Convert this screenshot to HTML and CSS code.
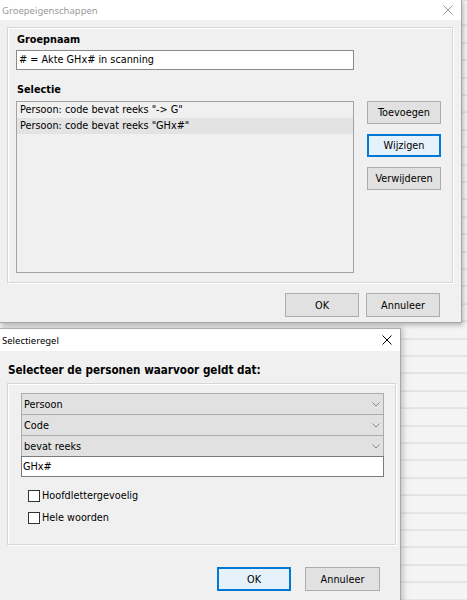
FILE: index.html
```html
<!DOCTYPE html>
<html lang="nl">
<head>
<meta charset="utf-8">
<title>Groepeigenschappen</title>
<link rel="stylesheet" href="styles.css">
</head>
<body>
<div class="desk">
  <section class="win win1">
    <header class="titlebar inactive">
      <span class="ttl">Groepeigenschappen</span>
      <svg class="close" width="10" height="10" viewBox="0 0 10 10"><path d="M0.5 0.5L9.5 9.5M9.5 0.5L0.5 9.5" stroke="currentColor" stroke-width="1" fill="none"/></svg>
    </header>
    <div class="wbody">
      <div class="group group1">
        <div class="lbl">Groepnaam</div>
        <div class="input input1"># = Akte GHx# in scanning</div>
        <div class="lbl sel">Selectie</div>
        <div class="selrow">
          <div class="listbox">
            <div class="row">Persoon: code bevat reeks "-&gt; G"</div>
            <div class="row hl">Persoon: code bevat reeks "GHx#"</div>
          </div>
          <div class="sidebtns">
            <div class="btn">Toevoegen</div>
            <div class="btn focus">Wijzigen</div>
            <div class="btn">Verwijderen</div>
          </div>
        </div>
      </div>
      <div class="footer footer1">
        <div class="btn big">OK</div>
        <div class="btn big">Annuleer</div>
      </div>
    </div>
  </section>

  <section class="win win2">
    <header class="titlebar titlebar2">
      <span class="ttl">Selectieregel</span>
      <svg class="close" width="10" height="10" viewBox="0 0 10 10"><path d="M0.5 0.5L9.5 9.5M9.5 0.5L0.5 9.5" stroke="currentColor" stroke-width="1" fill="none"/></svg>
    </header>
    <div class="wbody">
      <div class="heading">Selecteer de personen waarvoor geldt dat:</div>
      <div class="group group2">
        <div class="dd"><span>Persoon</span><svg width="8" height="5" viewBox="0 0 8 5"><path d="M0.5 0.5L4 4L7.5 0.5" fill="none" stroke="#8a8a8a"/></svg></div>
        <div class="dd"><span>Code</span><svg width="8" height="5" viewBox="0 0 8 5"><path d="M0.5 0.5L4 4L7.5 0.5" fill="none" stroke="#8a8a8a"/></svg></div>
        <div class="dd"><span>bevat reeks</span><svg width="8" height="5" viewBox="0 0 8 5"><path d="M0.5 0.5L4 4L7.5 0.5" fill="none" stroke="#8a8a8a"/></svg></div>
        <div class="input input2">GHx#</div>
        <div class="checks">
          <div class="check"><span class="box"></span><span>Hoofdlettergevoelig</span></div>
          <div class="check"><span class="box"></span><span>Hele woorden</span></div>
        </div>
      </div>
      <div class="footer footer2">
        <div class="btn big focus">OK</div>
        <div class="btn big wide">Annuleer</div>
      </div>
    </div>
  </section>
</div>
</body>
</html>
```

FILE: styles.css
```css
* { box-sizing: border-box; }

body { margin: 0; }

.desk {
  width: 467px;
  height: 600px;
  overflow: hidden;
  background-color: #f4f4f4;
  background-image: repeating-linear-gradient(to bottom, #f4f4f4 0, #f4f4f4 16.4px, #d4d4d4 16.4px, #d4d4d4 17.4px);
  background-position: 0 8.6px;
  font-family: "DejaVu Sans", "Liberation Sans", sans-serif;
  font-stretch: condensed;
  font-size: 10.8px;
  color: #000;
}

.win {
  background: #f0f0f0;
  display: flex;
  flex-direction: column;
}

.win1 {
  width: 462px;
  height: 323px;
  border-right: 1px solid #a8a8a8;
  border-bottom: 1px solid #a8a8a8;
  box-shadow: 1px 2px 5px rgba(0, 0, 0, 0.28);
  position: relative;
  z-index: 2;
}

.win2 {
  width: 401px;
  height: 300px;
  margin-top: 5px;
  border-top: 1px solid #b4b4b4;
  border-right: 1px solid #a8a8a8;
  box-shadow: 2px 0 6px rgba(0, 0, 0, 0.22);
}

.titlebar {
  background: #fff;
  height: 20px;
  display: flex;
  align-items: center;
  justify-content: space-between;
  padding: 0 8px 0 2px;
  font-family: "Noto Sans", "Open Sans", sans-serif;
  font-stretch: normal;
  font-size: 9.5px;
  color: #000;
}

.titlebar.inactive { color: #9a9a9a; }
.titlebar2 { height: 22px; }

.close { display: block; }

.group {
  border: 1px solid #d6d6d6;
  box-shadow: inset 1px 1px 0 #fff, 1px 1px 0 #fff;
}

.group1 {
  margin: 7px 0 0 7px;
  width: 446px;
  height: 256px;
  padding: 5px 10px 0 8px;
}

.lbl {
  font-weight: bold;
  line-height: 14px;
  height: 14px;
  padding-left: 1px;
}

.lbl.sel { margin-top: 13px; }

.input {
  background: #fff;
  border: 1px solid #8a8a8a;
  padding-left: 2px;
  white-space: nowrap;
}

.input1 {
  margin-top: 3px;
  width: 338px;
  height: 20px;
  line-height: 18px;
}

.selrow {
  display: flex;
  margin-top: 4px;
  gap: 13px;
}

.listbox {
  width: 338px;
  height: 172px;
  border: 1px solid #a3a3a3;
}

.row {
  height: 16px;
  line-height: 16px;
  padding-left: 3px;
  white-space: nowrap;
}

.row.hl { background: #e3e3e3; }

.sidebtns {
  display: flex;
  flex-direction: column;
  gap: 10px;
}

.btn {
  width: 74px;
  height: 23px;
  background: #e1e1e1;
  border: 1px solid #adadad;
  display: flex;
  align-items: center;
  justify-content: center;
  white-space: nowrap;
}

.btn.big { height: 24px; }
.btn.wide { width: 75px; }

.btn.focus {
  background: #e5f1fb;
  border: 1px solid #0078d7;
  box-shadow: inset 0 0 0 1px #0078d7;
}

.footer {
  display: flex;
  justify-content: flex-end;
}

.footer1 {
  margin-top: 10px;
  padding-right: 21px;
  gap: 7px;
}

.heading {
  margin: 11px 0 0 8px;
  font-weight: bold;
  font-size: 11.6px;
  line-height: 16px;
  height: 16px;
  white-space: nowrap;
}

.group2 {
  margin: 5px 0 0 7px;
  width: 389px;
  height: 162px;
  padding: 9px 11px 0 13px;
}

.dd {
  height: 22px;
  background: #e1e1e1;
  border: 1px solid #adadad;
  display: flex;
  align-items: center;
  justify-content: space-between;
  padding: 0 3px 0 2px;
}

.dd + .dd { margin-top: -1px; }

.dd svg { display: block; }

.input2 {
  margin-top: -1px;
  height: 21px;
  line-height: 19px;
  padding-left: 1px;
  border-color: #7a7a7a;
}

.checks {
  margin-top: 12px;
  padding-left: 7px;
  display: flex;
  flex-direction: column;
  gap: 9px;
}

.check {
  display: flex;
  align-items: center;
  gap: 2px;
  height: 13px;
}

.box {
  width: 12px;
  height: 12px;
  background: #fff;
  border: 1px solid #333;
}

.footer2 {
  margin-top: 22px;
  padding-right: 20px;
  gap: 14px;
}
```
